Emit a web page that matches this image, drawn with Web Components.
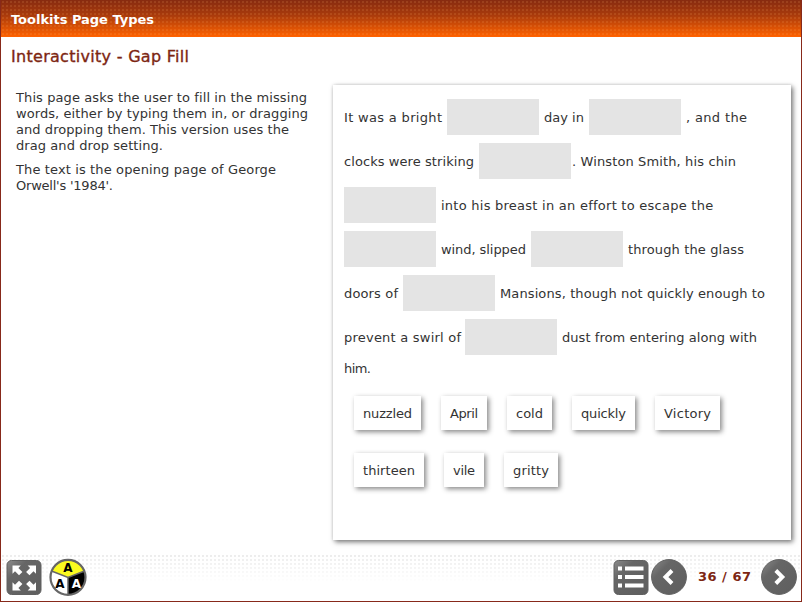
<!DOCTYPE html>
<html lang="en"><head><meta charset="utf-8"><title>Toolkits Page Types</title>
<style>html,body{margin:0;height:100%;overflow:hidden}body{font-family:Verdana,"DejaVu Sans",sans-serif;font-size:13px;color:#333}</style>
</head><body>
<toolkit-page></toolkit-page>
<script>
const define=(name,html,after)=>customElements.define(name,class extends HTMLElement{
  connectedCallback(){
    if(this.shadowRoot)return;
    this.attachShadow({mode:'open'}).innerHTML=html;
    if(after)after(this);
  }
});

/* A single line of text whose tracking is adjusted to fill the width in its w attribute. */
define('fit-text',`<style>:host{display:block;flex:none;white-space:pre;line-height:16px}span{display:inline-block}</style><span><slot></slot></span>`,el=>{
  const s=el.shadowRoot.querySelector('span'),w=+el.getAttribute('w');
  el.style.width=w+'px';
  s.style.letterSpacing=((w-s.getBoundingClientRect().width)/(el.textContent.length-1))+'px';
});
define('gap-box',`<style>:host{display:block;flex:none;width:92px;height:36px;background:#e4e4e4}</style>`);
define('gap-line',`<style>:host{display:flex;align-items:center;height:44px}::slotted(fit-text){padding-top:2px}</style><slot></slot>`);
define('word-chip',`<style>:host{display:flex;flex:none;box-sizing:border-box;height:34px;padding:1px 0 0 9px;align-items:center;background:#fff;box-shadow:2px 2px 5px #888}</style><slot></slot>`,el=>{el.style.width=el.getAttribute('box')+'px'});
define('chip-row',`<style>:host{display:flex;height:34px;margin-bottom:23px}</style><slot></slot>`);
define('page-header',`<style>:host{display:flex;box-sizing:border-box;height:37px;padding:2px 0 0 10px;align-items:center;color:#fff;font-weight:bold;
background:radial-gradient(circle at 2px 2px,rgba(255,180,110,.14) 0 1px,transparent 1.5px) 0 0/4px 4px,linear-gradient(#872b10,#a83a0c 40%,#ff6200)}</style><slot></slot>`);
define('nav-icon',`<style>:host{display:block;flex:none;width:38px;height:38px}svg{display:block}</style><svg width="38" height="38" viewBox="0 0 38 38"></svg>`,el=>{
  const defs='<defs><linearGradient id="g" x1="0" y1="0" x2="1" y2="1"><stop offset="0" stop-color="#8c8c8c"/><stop offset=".3" stop-color="#666"/><stop offset="1" stop-color="#5e5e5e"/></linearGradient></defs>';
  const sq='<rect x="2" y="2.5" width="34" height="34" rx="4.500" fill="url(#g)" stroke="#606060"/>';
  const ci='<circle cx="19" cy="19" r="17.400" fill="url(#g)" stroke="#606060"/>';
  const arrow='<path d="M7.500 7.500H15.800L13.400 9.900 17.400 13.900 14 17.300 10 13.300 7.500 15.800Z"/>';
  const kinds={
    full:sq+'<g fill="#fff">'+arrow+'<g transform="matrix(-1 0 0 1 38.500 0)">'+arrow+'</g><g transform="matrix(1 0 0 -1 0 40)">'+arrow+'</g><g transform="matrix(-1 0 0 -1 38.500 40)">'+arrow+'</g></g>',
    list:sq+'<path fill="#fff" d="M6 8.500h4v4H6zm7 0h18.500v4H13zM6 17h4v4H6zm7 0h18.500v4H13zM6 25.500h4v4H6zm7 0h18.500v4H13z"/>',
    prev:ci+'<path d="M22 12.500 15.500 19l6.500 6.500" fill="none" stroke="#fff" stroke-width="4"/>',
    next:ci+'<path d="M15.800 12.500 22.300 19l-6.500 6.500" fill="none" stroke="#fff" stroke-width="4"/>',
    contrast:'<circle cx="19" cy="19.500" r="17.500" fill="#fff"/><path d="M19 19.500 2.500 13A17.700 17.700 0 0 1 35.500 13Z" fill="#fafa20"/><path d="M19 19.500 35.500 13A17.700 17.700 0 0 1 19 37Z" fill="#000"/><path d="M2.500 13 19 19.500 35.500 13M19 19.500V37" fill="none" stroke="#666" stroke-width="1.500"/><circle cx="19" cy="19.300" r="17.500" fill="none" stroke="#666" stroke-width="2.200"/><g font-family="DejaVu Sans,sans-serif" font-weight="bold" font-size="12" text-anchor="middle"><text x="19" y="14">A</text><text x="11" y="30">A</text><text x="27.300" y="30" fill="#fff">A</text></g>'
  };
  el.shadowRoot.querySelector('svg').innerHTML=defs+kinds[el.getAttribute('kind')];
});
define('page-footer',`<style>:host{display:flex;box-sizing:border-box;height:47px;padding:4px 3px 0 4px;background:linear-gradient(transparent,#fff 28px),radial-gradient(circle at 2px 2px,#ececec 0 1px,transparent 1.5px) 0 0/4px 4px}
.sp{flex:1}.fs{margin-right:6px}.num{width:53px;margin:11px 9px 0 10px;color:#7d2612;font-weight:bold}</style>
<nav-icon class="fs" kind="full"></nav-icon><nav-icon kind="contrast"></nav-icon><div class="sp"></div>
<nav-icon kind="list"></nav-icon><nav-icon kind="prev"></nav-icon><div class="num"><fit-text w="53">36 / 67</fit-text></div><nav-icon kind="next"></nav-icon>`);
define('gap-panel',`<style>:host{display:block;box-sizing:border-box;width:458px;height:455px;padding:10px 0 0 11px;background:#fff;box-shadow:2px 2px 5px #777,0 0 3px #ddd}
.last{height:16px;margin:1px 0 20px}.chips{padding-left:10px}</style>
<gap-line><fit-text w="98">It was a bright</fit-text><gap-box style="margin:0 5px"></gap-box><fit-text w="40">day in</fit-text><gap-box style="margin:0 5px"></gap-box><fit-text w="61">, and the</fit-text></gap-line>
<gap-line><fit-text w="130">clocks were striking</fit-text><gap-box style="margin:0 1px 0 5px"></gap-box><fit-text w="164">. Winston Smith, his chin</fit-text></gap-line>
<gap-line><gap-box style="margin-right:5px"></gap-box><fit-text w="272">into his breast in an effort to escape the</fit-text></gap-line>
<gap-line><gap-box style="margin-right:5px"></gap-box><fit-text w="85">wind, slipped</fit-text><gap-box style="margin:0 5px"></gap-box><fit-text w="116">through the glass</fit-text></gap-line>
<gap-line><fit-text w="54">doors of</fit-text><gap-box style="margin:0 5px"></gap-box><fit-text w="265">Mansions, though not quickly enough to</fit-text></gap-line>
<gap-line><fit-text w="117">prevent a swirl of</fit-text><gap-box style="margin:0 5px 0 4px"></gap-box><fit-text w="195">dust from entering along with</fit-text></gap-line>
<gap-line class="last"><fit-text w="27">him.</fit-text></gap-line>
<div class="chips"><chip-row><word-chip box="67"><fit-text w="49">nuzzled</fit-text></word-chip><word-chip box="46" style="margin-left:20px"><fit-text w="28">April</fit-text></word-chip><word-chip box="45" style="margin-left:20px"><fit-text w="27">cold</fit-text></word-chip><word-chip box="63" style="margin-left:20px"><fit-text w="45">quickly</fit-text></word-chip><word-chip box="65" style="margin-left:20px"><fit-text w="47">Victory</fit-text></word-chip></chip-row>
<chip-row><word-chip box="70"><fit-text w="52">thirteen</fit-text></word-chip><word-chip box="40" style="margin-left:20px"><fit-text w="22">vile</fit-text></word-chip><word-chip box="54" style="margin-left:20px"><fit-text w="36">gritty</fit-text></word-chip></chip-row></div>`);
define('toolkit-page',`<style>:host{display:flex;flex-direction:column;box-sizing:border-box;width:802px;height:602px;border:solid #87291a;border-width:0 1px 1px;background:#fff}
h1{margin:0;height:47px;padding:12px 0 0 10px;box-sizing:border-box;font-size:16px;font-weight:normal;color:#7d2612;-webkit-text-stroke:.35px #7d2612}
main{display:flex;flex:1;padding-top:1px}.left{width:318px;box-sizing:border-box;padding:5px 0 0 15px;margin-right:14px}.p2{margin-top:8px}</style>
<page-header><fit-text w="143">Toolkits Page Types</fit-text></page-header>
<h1><fit-text w="178">Interactivity - Gap Fill</fit-text></h1>
<main><div class="left"><fit-text w="291">This page asks the user to fill in the missing</fit-text><fit-text w="292">words, either by typing them in, or dragging</fit-text><fit-text w="273">and dropping them. This version uses the</fit-text><fit-text w="147">drag and drop setting.</fit-text><div class="p2"><fit-text w="260">The text is the opening page of George</fit-text><fit-text w="97">Orwell's '1984'.</fit-text></div></div><gap-panel></gap-panel></main>
<page-footer></page-footer>`);
</script></body></html>
